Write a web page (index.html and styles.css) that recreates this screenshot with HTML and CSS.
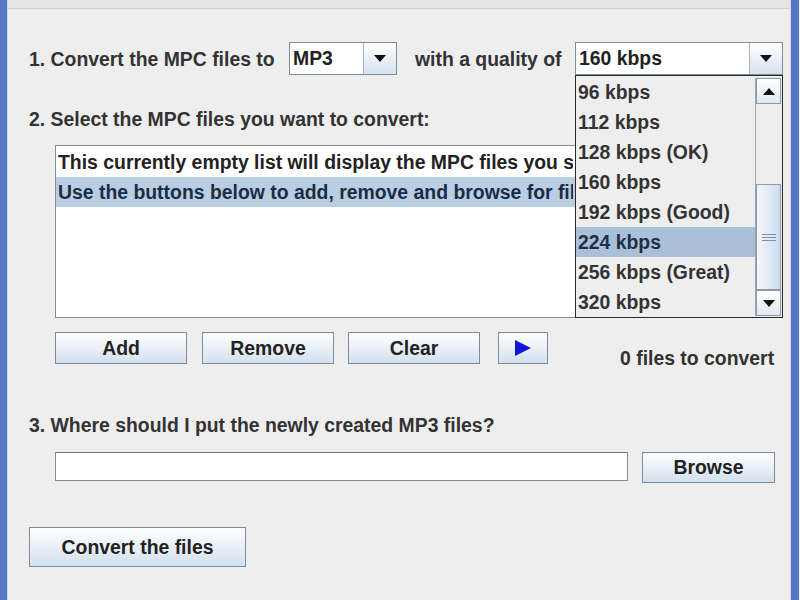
FILE: index.html
```html
<!DOCTYPE html>
<html lang="en">
<head>
    <meta charset="UTF-8">
    <meta name="viewport" content="width=device-width, initial-scale=1.0">
    <title>MPC Converter</title>
    <link rel="stylesheet" href="styles.css">
</head>
<body>

    <div class="frame-edge frame-left"></div>

    <div class="window">
        <div class="title-strip"></div>

        <div class="content">

            <!-- Step 1: output format and quality -->
            <div class="row format-row">
                <span class="label label-format">1. Convert the MPC files to</span>
                <div class="combo combo-format">
                    <span class="combo-value">MP3</span>
                    <span class="combo-arrow">
                        <svg width="12" height="7" viewBox="0 0 12 7"><polygon points="0,0 12,0 6,7" fill="#111"/></svg>
                    </span>
                </div>
                <span class="label label-quality">with a quality of</span>
                <div class="combo combo-quality">
                    <span class="combo-value">160 kbps</span>
                    <span class="combo-arrow">
                        <svg width="12" height="7" viewBox="0 0 12 7"><polygon points="0,0 12,0 6,7" fill="#111"/></svg>
                    </span>

                    <!-- open quality popup -->
                    <div class="popup">
                        <ul class="popup-list">
                            <li>96 kbps</li>
                            <li>112 kbps</li>
                            <li>128 kbps (OK)</li>
                            <li>160 kbps</li>
                            <li>192 kbps (Good)</li>
                            <li class="selected">224 kbps</li>
                            <li>256 kbps (Great)</li>
                            <li>320 kbps</li>
                        </ul>
                        <div class="scrollbar">
                            <div class="scroll-btn">
                                <svg width="12" height="7" viewBox="0 0 12 7"><polygon points="0,7 12,7 6,0" fill="#111"/></svg>
                            </div>
                            <div class="scroll-track">
                                <div class="scroll-thumb">
                                    <span class="grip"></span>
                                    <span class="grip"></span>
                                    <span class="grip"></span>
                                </div>
                            </div>
                            <div class="scroll-btn">
                                <svg width="12" height="7" viewBox="0 0 12 7"><polygon points="0,0 12,0 6,7" fill="#111"/></svg>
                            </div>
                        </div>
                    </div>
                </div>
            </div>

            <!-- Step 2: file list -->
            <p class="label step-label">2. Select the MPC files you want to convert:</p>
            <ul class="file-list">
                <li><span class="item-text">This currently empty list will display the MPC files you select.</span></li>
                <li class="selected"><span class="item-text">Use the buttons below to add, remove and browse for files.</span></li>
            </ul>

            <div class="row list-buttons">
                <button class="btn btn-list">Add</button>
                <button class="btn btn-list btn-remove">Remove</button>
                <button class="btn btn-list btn-clear">Clear</button>
                <button class="btn btn-play">
                    <svg width="18" height="18" viewBox="0 0 18 18"><polygon points="1,1 17,9 1,17" fill="#1414d8"/></svg>
                </button>
                <span class="label file-count">0 files to convert</span>
            </div>

            <!-- Step 3: destination -->
            <p class="label step-label step-three">3. Where should I put the newly created MP3 files?</p>
            <div class="row dest-row">
                <input type="text" class="dest-field">
                <button class="btn btn-browse">Browse</button>
            </div>

            <button class="btn btn-convert">Convert the files</button>
        </div>
    </div>

    <div class="frame-edge frame-right"></div>

</body>
</html>
```

FILE: styles.css
```css
body {
    margin: 0;
    height: 100vh;
    display: flex;
    background-color: #eeeeee;
    font-family: "Liberation Sans", Arial, sans-serif;
    font-weight: bold;
    font-size: 19.4px;
    color: #333;
    overflow: hidden;
}
.frame-edge {
    background: #5577c4;
}
.frame-left {
    width: 7px;
    border-right: 1px solid #c9d5ec;
}
.frame-right {
    width: 8px;
    border-left: 1px solid #c9d5ec;
}
.window {
    width: 782px;
    display: flex;
    flex-direction: column;
}
.title-strip {
    height: 8px;
    background: #e4e4e4;
    border-bottom: 1px solid #cdcdcd;
}
.content {
    padding: 33px 0 0 21px;
}
.row {
    display: flex;
    align-items: center;
}
.label {
    white-space: nowrap;
    line-height: 24px;
}

/* combo boxes */
.label-format {
    width: 260px;
}
.label-quality {
    width: 160px;
    margin-left: 18px;
}
.combo {
    position: relative;
    height: 31px;
    display: flex;
    background: #fff;
    border: 1px solid #7f8c99;
}
.combo-format {
    width: 106px;
}
.combo-quality {
    width: 206px;
}
.combo-value {
    flex: 1;
    padding-left: 3px;
    line-height: 31px;
    color: #222;
}
.combo-arrow {
    width: 32px;
    display: flex;
    align-items: center;
    justify-content: center;
    border-left: 1px solid #a6b2bf;
    background: linear-gradient(#ffffff, #d6e2ef);
}

/* quality popup */
.popup {
    position: absolute;
    top: 32px;
    left: -1px;
    width: 206px;
    height: 241px;
    display: flex;
    background: #eeeeee;
    border: 1px solid #2a2a2a;
    z-index: 5;
}
.popup-list {
    list-style: none;
    margin: 1px 0 0 0;
    padding: 0;
    flex: 1;
}
.popup-list li {
    height: 30px;
    line-height: 30px;
    padding-left: 2px;
    color: #333;
    white-space: nowrap;
}
.popup-list li.selected {
    background: #a9c0d8;
    color: #1f2f45;
}
.scrollbar {
    width: 25px;
    margin: 2px 1px 1px 0;
    display: flex;
    flex-direction: column;
    border-left: 1px solid #9aa6b2;
}
.scroll-btn {
    height: 24px;
    display: flex;
    align-items: center;
    justify-content: center;
    border: 1px solid #8d99a6;
    background: linear-gradient(#ffffff, #dfe8f2);
}
.scroll-track {
    flex: 1;
    display: flex;
    flex-direction: column;
    justify-content: flex-end;
    background: #eeeeee;
}
.scroll-thumb {
    height: 104px;
    display: flex;
    flex-direction: column;
    align-items: center;
    justify-content: center;
    gap: 2px;
    border: 1px solid #8d99a6;
    background: linear-gradient(90deg, #f4f8fc, #cddcee);
}
.grip {
    width: 14px;
    height: 1px;
    background: #7f8ea0;
}

/* file list */
.step-label {
    margin: 32px 0 0 0;
}
.file-list {
    list-style: none;
    margin: 14px 0 0 26px;
    padding: 1px 0 0 0;
    width: 719px;
    height: 170px;
    background: #fff;
    border: 1px solid #8a8a8a;
    overflow: hidden;
}
.file-list li {
    height: 30px;
    line-height: 30px;
    padding-left: 2px;
    color: #222;
    white-space: nowrap;
}
/* the popup hangs over the right part of the list */
.item-text {
    display: block;
    width: 515px;
    overflow: hidden;
}
.file-list li.selected {
    background: #b9cde3;
    color: #1c2c44;
}

/* buttons */
.btn {
    font-family: inherit;
    font-weight: bold;
    font-size: 19.4px;
    color: #222;
    border: 1px solid #7e8a97;
    border-radius: 0;
    padding: 0;
    background: linear-gradient(#ffffff, #d3e0ee);
}
.list-buttons {
    margin: 14px 0 0 26px;
    align-items: flex-start;
}
.btn-list {
    width: 132px;
    height: 32px;
}
.btn-remove {
    margin-left: 15px;
}
.btn-clear {
    margin-left: 14px;
}
.btn-play {
    width: 50px;
    height: 32px;
    margin-left: 18px;
    display: flex;
    align-items: center;
    justify-content: center;
}
.file-count {
    margin-left: 72px;
    padding-top: 14px;
}

/* destination */
.step-three {
    margin-top: 43px;
}
.dest-row {
    margin: 15px 0 0 26px;
    align-items: flex-start;
}
.dest-field {
    width: 571px;
    height: 27px;
    margin: 0;
    padding: 0;
    border: 1px solid #8a8a8a;
    border-top-color: #777;
    background: #fff;
}
.btn-browse {
    width: 133px;
    height: 31px;
    margin-left: 14px;
}
.btn-convert {
    display: block;
    width: 217px;
    height: 40px;
    margin-top: 44px;
}
```
